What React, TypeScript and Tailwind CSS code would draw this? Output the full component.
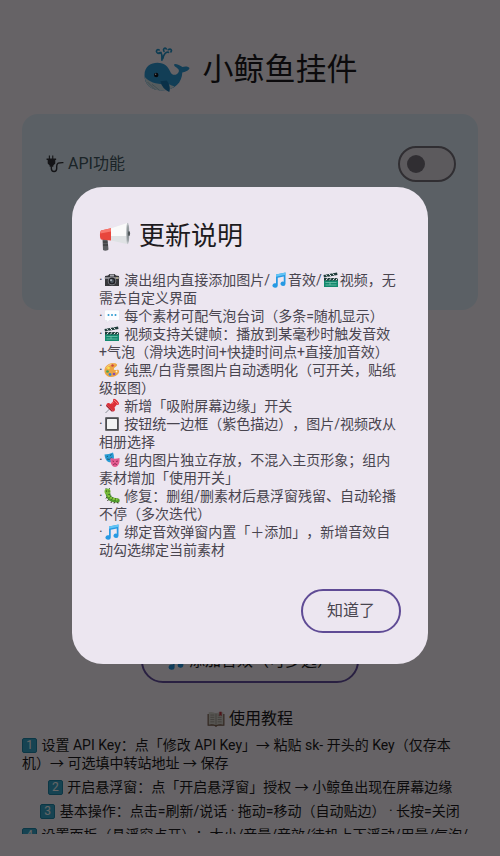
import { useState, type ReactNode } from "react";

type IconProps = { className?: string };

function Icon({ className = "", children }: { className?: string; children: ReactNode }) {
  return (
    <svg viewBox="0 0 32 32" aria-hidden="true" className={`inline-block shrink-0 ${className}`}>
      {children}
    </svg>
  );
}

const small = "mx-px -mt-0.5 size-4";

function Whale() {
  return (
    <Icon className="size-12">
      <g fill="none" stroke="#2496cc" strokeWidth="1.1" strokeLinecap="round">
        <path d="M12.6 9.500V6.600C12.600 4.700 11.500 4 10.700 4.600M13.200 8.500C13.600 5.500 15.500 3.500 17 4.200" />
        <path d="M10.800 2.600C9.400 2 8.400 3.200 9.300 4.300C10.100 5.200 11.600 5 12 4.300M14 3.600C13 2 14.500.9 15.500 1.900M16.800 2.500C18.500 1.400 19.600 2.800 18.600 3.900" />
      </g>
      <path d="M1 19.500C1 13.400 5.500 11.200 9.500 11.200C14.700 11.200 16.400 13.500 18.200 17.200C19.200 19.500 21 19.700 22.700 18.600C24 17.700 24.300 16.400 23.500 15.400C22.400 14.200 20.400 13.300 20.700 12.300C21.200 11.300 24.600 12.600 26.300 14C28 13.300 30.800 13.700 31 14.800C30.700 16.200 28 17.300 26.200 17.600C26 24 21.500 29.600 12.500 29.600C5 29.600 1 25.500 1 19.500Z" fill="#2f9bd8" />
      <path d="M1.100 20.500C4 24.200 9.500 25.900 16.900 25.500C18.500 26 20 26.500 21 27C18.800 28.800 16 29.600 12.500 29.600C5.500 29.600 1.500 26 1.100 20.500Z" fill="#d5e5ec" />
      <path d="M3 24L8 29M6 25.500L11 29.500" stroke="#9bbdca" strokeWidth=".6" />
      <path d="M11.500 23.500C12.500 27 14.500 29.500 17.500 30.700C18.400 28 17.500 25 15.800 23Z" fill="#1879b4" />
      <circle cx="8.800" cy="19.300" r="1.500" fill="#10131c" />
      <circle cx="8.400" cy="18.900" r=".5" fill="#fff" />
    </Icon>
  );
}

function Plug() {
  return (
    <Icon className="size-[18px]">
      <path d="M6 1V7M12 1V7" stroke="#34343a" strokeWidth="2" />
      <path d="M1 6H18V9H16.500V15L13 18.500V21H6.500V18.500L3 15V9H1Z" fill="#34343a" />
      <path d="M9.500 20V24C9.500 31 19 31 19 24V20C19 13 23 13.500 31 13.500" fill="none" stroke="#34343a" strokeWidth="2.500" />
    </Icon>
  );
}

function Megaphone() {
  return (
    <Icon className="size-8">
      <path d="M3.500 18H8.500L9.500 28.500C8 30 5.500 30 4 29Z" fill="#5c5e61" />
      <path d="M4 21H8.500M4 24H9" stroke="#2e3033" />
      <path d="M2 9.500L12 7.200V19.600L2 18.500C.6 17 .6 11 2 9.500Z" fill="#e8463c" />
      <path d="M2 9.500L12 7.200V10.500L1.300 12.500Z" fill="#f8766c" />
      <path d="M12 7.200L28 2V23L12 19.600Z" fill="#dfe2e4" />
      <path d="M12 7.200L28 2V15L12 15Z" fill="#fafafa" />
      <ellipse cx="28.700" cy="12.500" rx="1.700" ry="10.700" fill="#b9bec1" />
      <ellipse cx="29" cy="12.500" rx="1" ry="8.500" fill="#8c9396" />
      <ellipse cx="30" cy="12.500" rx="1.100" ry="2.500" fill="#4f5659" />
    </Icon>
  );
}

function Camera() {
  return (
    <Icon className={small}>
      <path d="M2 8L8 7L11 4H21L24 7L30 8V28H2Z" fill="#37373b" />
      <path d="M1.500 10H30.500V14H1.500Z" fill="#85858a" />
      <path d="M12 5H20V9H12Z" fill="#aaaab0" />
      <circle cx="16" cy="18" r="8.500" fill="#929299" />
      <circle cx="16" cy="18" r="7" fill="#202126" />
      <circle cx="16" cy="18" r="3.800" fill="#505963" />
      <circle cx="14" cy="16" r="1.700" fill="#dfe8f0" />
      <circle cx="26" cy="12" r="1.500" fill="#d6c77e" />
    </Icon>
  );
}

function Music({ className = small }: IconProps) {
  return (
    <Icon className={className}>
      <path d="M10 5L29 1V23.500A5 4.500 0 1 1 25.500 19.300V9L13.500 11.500V27A5.300 4.500 0 1 1 10 22.700Z" fill="#2699e3" />
      <path d="M10 5L29 1V5.500L10 9.500Z" fill="#63c4f5" />
    </Icon>
  );
}

function Clapper() {
  return (
    <Icon className={small}>
      <path d="M2 12H30V30H2Z" fill="#13896e" />
      <path d="M2 12H30V17H2Z" fill="#203c3b" />
      <path d="M1 6L28 1L29 6L2 11Z" fill="#203c3b" />
      <path d="M5 5.500L9 9.300M12 4.200L16 8M19 3L23 6.700M6 16.500L9 12.500M13 16.500L16 12.500M20 16.500L23 12.500M26 16.500L29 12.500" stroke="#edf5f1" strokeWidth="2" />
      <path d="M5 21H27M5 26H27M14 21V26" stroke="#84cbb8" strokeWidth="1.400" />
    </Icon>
  );
}

function Speech() {
  return (
    <Icon className={small}>
      <path d="M5 4H28C31 4 31 6 31 8V21C31 24 30 25 27 25H10L5 30L6 25H4C1 25 1 23 1 20V8C1 5 2 4 5 4Z" fill="#fcfdff" stroke="#dddfe8" />
      <circle cx="9" cy="14" r="2" fill="#2c9bd1" />
      <circle cx="16" cy="14" r="2" fill="#2c9bd1" />
      <circle cx="23" cy="14" r="2" fill="#2c9bd1" />
    </Icon>
  );
}

function Palette() {
  return (
    <Icon className={small}>
      <path d="M20 2C8 1 0 10 1 19C2 29 13 33 23 28C29 25 32 19 29 16C26 14 22 18 20 15C18 12 24 10 26 7C27 5 24 2 20 2Z" fill="#eba444" />
      <path d="M20 3C10 3 4 9 3 15C9 6 16 5 24 4Z" fill="#f9c878" />
      <circle cx="17" cy="7" r="2.500" fill="#cc4540" />
      <circle cx="9" cy="12" r="2.700" fill="#f5e34e" />
      <circle cx="7" cy="19" r="2.700" fill="#43a65b" />
      <circle cx="12" cy="25" r="2.800" fill="#3589d4" />
      <circle cx="20" cy="24" r="2.600" fill="#874eb0" />
      <circle cx="25" cy="19" r="1.800" fill="#fff0d8" />
    </Icon>
  );
}

function Pin() {
  return (
    <Icon className={small}>
      <path d="M13 20L3 30" stroke="#8b9299" strokeWidth="2" />
      <path d="M19 2C22 0 31 9 30 12C29 15 26 13 25 14L21 19C23 23 22 26 19 27L5 13C6 10 10 9 13 12L18 7C19 5 17 4 19 2Z" fill="#dc3039" />
      <path d="M20 4L28 12M15 12L19 8" stroke="#fa7b7b" strokeWidth="2" />
      <path d="M5 13L19 27L15 27L4 16Z" fill="#a91d2b" />
    </Icon>
  );
}

function SquareButton() {
  return (
    <Icon className={small}>
      <rect x="2" y="2" width="28" height="28" rx="2" fill="#88888c" />
      <rect x="3" y="3" width="26" height="26" rx="1" fill="#4d4d51" />
      <rect x="6" y="6" width="20" height="20" rx="1" fill="#f3f3f4" />
    </Icon>
  );
}

function Masks() {
  return (
    <Icon className={small}>
      <path d="M1 5Q10 5 18 1Q22 12 18 18Q14 22 9 20Q2 17 1 5Z" fill="#289bd3" />
      <path d="M5 10L8 8M12 7L15 5M6 14Q11 17 15 11" stroke="#14506e" strokeWidth="1.800" fill="none" />
      <path d="M13 12Q22 15 31 12Q32 23 27 28Q22 32 17 28Q12 23 13 12Z" fill="#e45b91" />
      <path d="M17 18L20 19M24 19L28 18M18 26Q22 20 26 26" stroke="#87284e" strokeWidth="1.800" fill="none" />
    </Icon>
  );
}

function Caterpillar() {
  return (
    <Icon className={small}>
      <path d="M7 7C8 19 12 24 27 25" fill="none" stroke="#519c2e" strokeWidth="9" strokeLinecap="round" />
      <path d="M6 8C8 18 12 21 25 23" fill="none" stroke="#8fcb3d" strokeWidth="4" strokeLinecap="round" />
      <circle cx="7" cy="7" r="6" fill="#77ba39" />
      <path d="M5 2L3 0M10 2L12 0M7 14L13 12M9 20L15 16M15 24L18 18M22 26L23 20" stroke="#285f24" strokeWidth="1.500" />
      <path d="M6 18L4 21M9 23L7 26M15 27L14 30M21 28L20 31M27 28L28 31" stroke="#343b24" strokeWidth="2" />
      <circle cx="5" cy="6" r="1.200" fill="#1b3011" />
      <circle cx="10" cy="6" r="1.200" fill="#1b3011" />
    </Icon>
  );
}

function Book() {
  return (
    <Icon className="size-[18px]">
      <path d="M1 7H31V28H19L16 30L13 28H1Z" fill="#765846" />
      <path d="M3 4Q10 2 16 6Q22 2 29 4V26Q22 24 16 27Q10 24 3 26Z" fill="#d8d4cc" />
      <path d="M16 6V27M6 9H13M6 13H13M6 17H13M6 21H13M19 9H26M19 13H26M19 17H26M19 21H26" stroke="#948e84" strokeWidth="1.300" />
      <path d="M22 3H26V11L24 9L22 11Z" fill="#c4343f" />
    </Icon>
  );
}

function Keycap({ n }: { n: number }) {
  return (
    <span className="-mt-0.5 mr-px inline-flex size-[15px] items-center justify-center rounded-xs border border-[#1e89ad] bg-[#39a9cd] align-middle text-xs leading-none text-white">
      {n}
    </span>
  );
}

function Switch() {
  const [on, setOn] = useState(false);
  return (
    <input
      id="api-switch"
      type="checkbox"
      role="switch"
      checked={on}
      onChange={(e) => setOn(e.target.checked)}
      className="flex h-9 w-[58px] appearance-none items-center rounded-full border-2 border-[#79747e] bg-[#e6e0e9] px-[7px] before:size-[18px] before:rounded-full before:bg-[#79747e] checked:justify-end checked:bg-[#6750a4]"
    />
  );
}

const notes: ReactNode[] = [
  <>·<Camera /> 演出组内直接添加图片/<Music />音效/<Clapper />视频，无<br />需去自定义界面</>,
  <>·<Speech /> 每个素材可配气泡台词（多条=随机显示）</>,
  <>·<Clapper /> 视频支持关键帧：播放到某毫秒时触发音效<br />+气泡（滑块选时间+快捷时间点+直接加音效）</>,
  <>·<Palette /> 纯黑/白背景图片自动透明化（可开关，贴纸<br />级抠图）</>,
  <>·<Pin /> 新增「吸附屏幕边缘」开关</>,
  <>·<SquareButton /> 按钮统一边框（紫色描边），图片/视频改从<br />相册选择</>,
  <>·<Masks /> 组内图片独立存放，不混入主页形象；组内<br />素材增加「使用开关」</>,
  <>·<Caterpillar /> 修复：删组/删素材后悬浮窗残留、自动轮播<br />不停（多次迭代）</>,
  <>·<Music /> 绑定音效弹窗内置「＋添加」，新增音效自<br />动勾选绑定当前素材</>,
];

const steps: { wraps: boolean; text: ReactNode }[] = [
  { wraps: true, text: <>设置 API Key：点「修改 API Key」→ 粘贴 sk- 开头的 Key（仅存本<br />机）→ 可选填中转站地址 → 保存</> },
  { wraps: false, text: "开启悬浮窗：点「开启悬浮窗」授权 → 小鲸鱼出现在屏幕边缘" },
  { wraps: false, text: "基本操作：点击=刷新/说话 · 拖动=移动（自动贴边） · 长按=关闭" },
  { wraps: true, text: "设置面板（悬浮窗点开）：大小/音量/音效/待机上下浮动/用量/气泡/" },
];

export default function App() {
  const [open, setOpen] = useState(true);
  return (
    <div className="relative flex h-screen flex-col bg-[#fef7ff] pb-[22px] font-[Roboto,'Noto_Sans_CJK_SC',sans-serif] text-[#1d1b20] [text-spacing-trim:space-all]">
      <main className="min-h-0 flex-1 overflow-hidden px-[22px] pt-[46px]">
        <h1 className="flex h-12 items-center justify-center gap-3 text-[31px]">
          <Whale />
          小鲸鱼挂件
        </h1>
        <section className="mt-5 h-[196px] rounded-2xl bg-[#e3f1fc] px-[22px] pt-8">
          <div className="flex items-center justify-between">
            <label htmlFor="api-switch" className="flex items-center gap-1 pl-0.5 text-base text-[#455a64]">
              <Plug />
              API功能
            </label>
            <Switch />
          </div>
        </section>
        <div className="mt-[329px] flex justify-center">
          <button className="flex h-11 items-center gap-1 rounded-full border-2 border-[#6750a4] px-6 text-base">
            <Music className="size-[18px]" />
            添加音效（可多选）
          </button>
        </div>
        <h2 className="mt-6 flex items-center justify-center gap-1 text-base">
          <Book />
          使用教程
        </h2>
        <ol className="mt-[5px] flex flex-col items-center gap-1.5 text-sm leading-[18px]">
          {steps.map((step, i) => (
            <li key={i} className={step.wraps ? "w-full whitespace-nowrap" : "whitespace-nowrap"}>
              <Keycap n={i + 1} /> {step.text}
            </li>
          ))}
        </ol>
      </main>
      {open && (
        <div className="absolute inset-0 flex items-center justify-center bg-black/60 px-[72px] pb-1.5">
          <div role="dialog" aria-modal="true" aria-labelledby="dialog-title" className="w-full rounded-[31px] bg-[#ece6f0] px-[27px] pt-[30px] pb-[31px]">
            <h2 id="dialog-title" className="flex h-10 items-center gap-2 text-[26px]">
              <Megaphone />
              更新说明
            </h2>
            <ul className="mt-3.5 text-sm leading-[18px] whitespace-nowrap text-[#49454f]">
              {notes.map((note, i) => (
                <li key={i}>{note}</li>
              ))}
            </ul>
            <div className="mt-[30px] flex justify-end">
              <button onClick={() => setOpen(false)} className="h-11 rounded-full border-2 border-[#5f4b95] px-6 text-base text-[#49454f]">
                知道了
              </button>
            </div>
          </div>
        </div>
      )}
    </div>
  );
}
